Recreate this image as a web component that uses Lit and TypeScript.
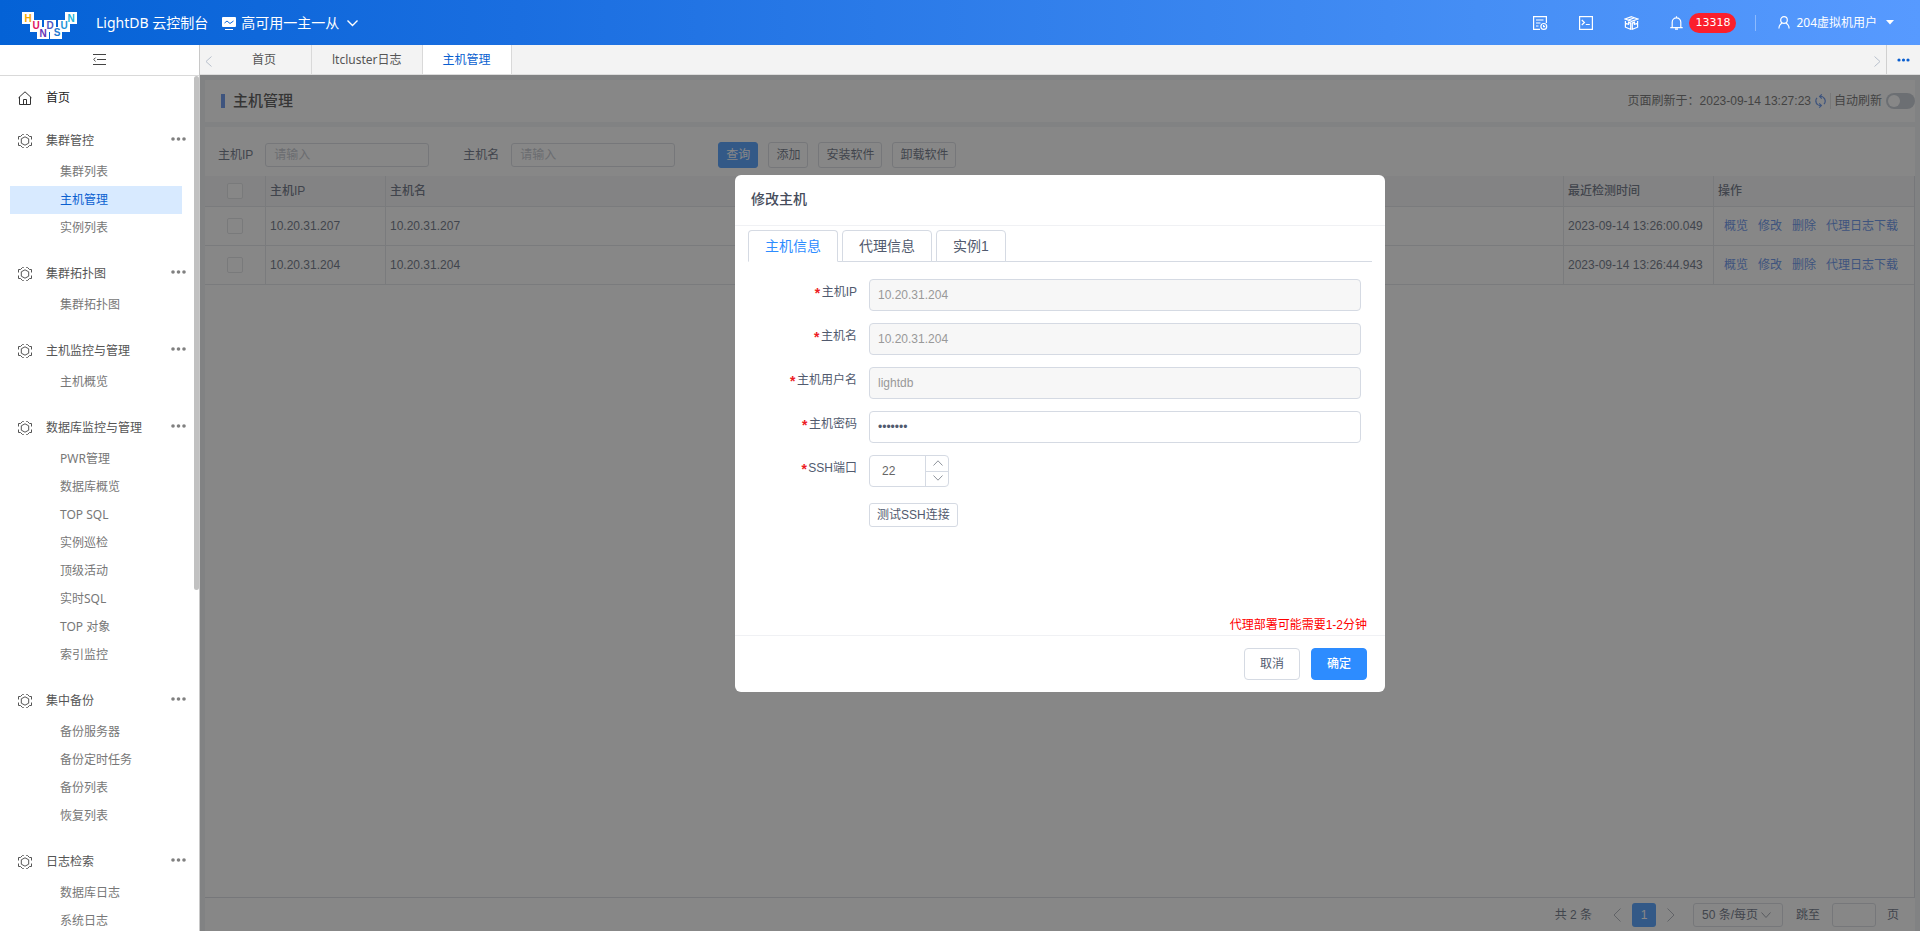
import { LitElement, html, css, svg } from "lit";
import { customElement, state } from "lit/decorators.js";
import { classMap } from "lit/directives/class-map.js";

interface MenuGroup {
  title: string;
  items: string[];
}

const MENU: MenuGroup[] = [
  { title: "集群管控", items: ["集群列表", "主机管理", "实例列表"] },
  { title: "集群拓扑图", items: ["集群拓扑图"] },
  { title: "主机监控与管理", items: ["主机概览"] },
  {
    title: "数据库监控与管理",
    items: ["PWR管理", "数据库概览", "TOP SQL", "实例巡检", "顶级活动", "实时SQL", "TOP 对象", "索引监控"],
  },
  { title: "集中备份", items: ["备份服务器", "备份定时任务", "备份列表", "恢复列表"] },
  { title: "日志检索", items: ["数据库日志", "系统日志"] },
];

const HOSTS = [
  { ip: "10.20.31.207", name: "10.20.31.207", time: "2023-09-14 13:26:00.049" },
  { ip: "10.20.31.204", name: "10.20.31.204", time: "2023-09-14 13:26:44.943" },
];

const chevron = (d: string, w: number, h: number) => html`
  <svg width=${w} height=${h} viewBox="0 0 ${w} ${h}" fill="none" stroke="currentColor" aria-hidden="true">
    <path d=${d}></path>
  </svg>
`;

/* ---------- top bar ---------- */

@customElement("top-bar")
export class TopBar extends LitElement {
  static styles = css`
    :host {
      display: flex;
      align-items: center;
      justify-content: space-between;
      height: 45px;
      padding: 0 26px 0 22px;
      box-sizing: border-box;
      background: linear-gradient(90deg, #0462d6 0%, #1a6ee0 27%, #458ef5 77%, #579aff 100%);
      color: #fff;
      font-size: 14px;
    }
    .left,
    .right,
    .cluster,
    .user {
      display: flex;
      align-items: center;
    }
    .logo {
      display: block;
      margin-top: 6px;
    }
    .logo text {
      font: bold 10px "Liberation Sans", sans-serif;
      text-anchor: middle;
    }
    .product {
      margin: 0 14px 0 19px;
      white-space: nowrap;
    }
    button {
      display: flex;
      align-items: center;
      padding: 0;
      border: 0;
      background: none;
      color: inherit;
      font: inherit;
    }
    .cluster {
      gap: 5px;
    }
    .right {
      font-size: 12px;
    }
    .icon {
      margin-right: 31px;
    }
    .alerts {
      gap: 6px;
    }
    .count {
      padding: 0 6px;
      border-radius: 10px;
      background: #fb1f2c;
      font: 11px/20px "DejaVu Sans", sans-serif;
    }
    .line {
      width: 1px;
      height: 16px;
      margin: 0 22px 0 19px;
      background: #8cbaff;
    }
    .name {
      margin: 0 9px 0 6px;
    }
    .down {
      margin-left: 3px;
    }
    svg {
      display: block;
    }
  `;

  private tile(x: number, y: number) {
    return svg`<rect x=${x} y=${y} width="12" height="12" fill="#fff"></rect>`;
  }

  render() {
    return html`
      <div class="left">
        <svg class="logo" width="55" height="27" viewBox="0 0 55 27" role="img" aria-label="HUNDSUN">
          ${this.tile(0, 0)}${this.tile(8, 8)}${this.tile(15, 15)}${this.tile(22, 8)}
          ${this.tile(28, 15)}${this.tile(36, 8)}${this.tile(43, 0)}
          <text x="6" y="10" fill="#f5a800">H</text>
          <text x="14" y="17" fill="#e0105f">U</text>
          <text x="21" y="25" fill="#6633b8">N</text>
          <text x="28" y="17" fill="#5057c4">D</text>
          <text x="35" y="24" fill="#1f78d0">S</text>
          <text x="42" y="17" fill="#1c94d8">U</text>
          <text x="49" y="10" fill="#22b4da">N</text>
        </svg>
        <span class="product">LightDB 云控制台</span>
        <button class="cluster" type="button">
          <svg width="14" height="14" viewBox="0 0 14 14" aria-hidden="true">
            <rect x="0" y="1" width="14" height="10" rx="1" fill="#fff"></rect>
            <path d="M2.5 7 5 5 8 7.5 11.5 5" fill="none" stroke="#0f68dc"></path>
            <path d="M3 13.5h8" stroke="#fff"></path>
          </svg>
          高可用一主一从
          <span class="down">
            <svg width="11" height="8" viewBox="0 0 11 8" fill="none" stroke="#fff" stroke-width="1.4" aria-hidden="true">
              <path d="M.5 1.5 5.5 6.5 10.5 1.5"></path>
            </svg>
          </span>
        </button>
      </div>
      <div class="right">
        <button class="icon" type="button" aria-label="任务">
          <svg width="15" height="14" viewBox="0 0 15 14" fill="none" stroke="#fff" stroke-width="1.2" aria-hidden="true">
            <path d="M7 13.4H.6V.6h12.8V7M3 4h7.5M3 7h4.5M3 10h2.5"></path>
            <circle cx="10.8" cy="10.4" r="2.9"></circle>
            <path d="M10.6 9v1.6h1.5"></path>
          </svg>
        </button>
        <button class="icon" type="button" aria-label="终端">
          <svg width="14" height="14" viewBox="0 0 14 14" fill="none" stroke="#fff" stroke-width="1.2" aria-hidden="true">
            <rect x=".6" y=".6" width="12.8" height="12.8"></rect>
            <path d="M2.8 4 5.4 6.5 2.8 9M6.8 8.5h4"></path>
          </svg>
        </button>
        <button class="icon" type="button" aria-label="组件">
          <svg width="15" height="14" viewBox="0 0 15 14" fill="none" stroke="#fff" stroke-width="1.2" aria-hidden="true">
            <path d="M7.5.7 13.8 3 7.5 5.3 1.2 3zM4.3 4.1l6.2-2.3"></path>
            <path d="M1.4 5v6.2l5.3 2.1V7L4.6 6.2v2.2L1.4 7.2M13.6 5v6.2l-5.3 2.1V7l2.1-.8v2.2l3.2-1.2"></path>
          </svg>
        </button>
        <button class="alerts" type="button">
          <svg width="13" height="14" viewBox="0 0 13 14" fill="none" stroke="#fff" stroke-width="1.2" aria-hidden="true">
            <path d="M2.2 11.3V6.2a4.3 4.3 0 0 1 8.6 0v5.1M.3 11.6h12.4M6.5.2v1.5M5 13.2h3"></path>
          </svg>
          <span class="count">13318</span>
        </button>
        <span class="line"></span>
        <button class="user" type="button">
          <svg width="12" height="13" viewBox="0 0 12 13" fill="none" stroke="#fff" stroke-width="1.2" aria-hidden="true">
            <circle cx="6" cy="4" r="3.3"></circle>
            <path d="M.9 12.6c.1-2.9 1.4-4.6 3.2-5.3M11.1 12.6c-.1-2.9-1.4-4.6-3.2-5.3"></path>
          </svg>
          <span class="name">204虚拟机用户</span>
          <svg width="8" height="5" viewBox="0 0 8 5" fill="#fff" aria-hidden="true"><path d="M0 0h8L4 4.5z"></path></svg>
        </button>
      </div>
    `;
  }
}

/* ---------- side menu ---------- */

@customElement("side-menu")
export class SideMenu extends LitElement {
  static styles = css`
    :host {
      position: relative;
      display: block;
      width: 200px;
      flex: none;
      box-sizing: border-box;
      border-right: 1px solid #c8c8c8;
      background: #fff;
      overflow: hidden;
      color: #555;
      font-size: 12px;
    }
    button {
      padding: 0;
      border: 0;
      background: none;
      color: inherit;
      font: inherit;
    }
    svg {
      display: block;
    }
    .fold {
      display: flex;
      width: 100%;
      height: 31px;
      align-items: center;
      justify-content: center;
      padding-bottom: 2px;
      border-bottom: 1px solid #d9d9d9;
      color: #444;
    }
    .head {
      display: flex;
      align-items: center;
      height: 34px;
      margin-top: 15px;
      padding: 0 13px 0 17px;
    }
    .home {
      height: 22px;
      margin-top: 11px;
      color: #222;
    }
    .head svg {
      flex: none;
    }
    .text {
      flex: 1;
      margin-left: 13px;
    }
    .head a,
    .item {
      color: inherit;
      text-decoration: none;
    }
    .more {
      padding-bottom: 5px;
      color: #808080;
    }
    ul {
      margin: 0;
      padding: 0 17px 0 10px;
      list-style: none;
    }
    .item {
      display: block;
      padding-left: 50px;
      line-height: 28px;
      color: #777;
    }
    .item.on {
      background: #d8eaff;
      color: #0a5fd0;
    }
    .thumb {
      position: absolute;
      top: 31px;
      right: 0;
      width: 5px;
      height: 58%;
      border-radius: 3px;
      background: #c1c1c1;
    }
  `;

  @state() private current = "主机管理";

  render() {
    return html`
      <button class="fold" type="button" aria-label="收起菜单">
        <svg width="13" height="11" viewBox="0 0 13 11" fill="none" stroke="currentColor" aria-hidden="true">
          <path d="M0 .5h13M4 5.5h9M0 10.5h13M2.6 3.6.7 5.5l1.9 1.9"></path>
        </svg>
      </button>
      <nav>
        <div class="head home">
          <svg width="16" height="14" viewBox="0 0 16 14" fill="none" stroke="#333" aria-hidden="true">
            <path d="M1.5 6.8 8 .8l6.5 6M2.5 6v7.5h11V6M6.5 13.5v-5h3v5"></path>
          </svg>
          <a class="text" href="#">首页</a>
        </div>
        ${MENU.map(
          (group) => html`
            <div class="head">
              <svg width="16" height="16" viewBox="0 0 16 16" fill="none" stroke="#555" aria-hidden="true">
                <path d="M1.5 6.5v-3h2l2-2h1.2M9.3 1.5h1.2l2 2h2v3M14.5 9.5v3h-2l-2 2H9.3M6.7 14.5H5.5l-2-2h-2v-3"></path>
                <path d="m8 3.8 3.7 2v4.4l-3.7 2-3.7-2V5.8z"></path>
              </svg>
              <span class="text">${group.title}</span>
              <button class="more" type="button" aria-label="更多">
                <svg width="15" height="4" viewBox="0 0 15 4" fill="currentColor" aria-hidden="true">
                  <circle cx="2" cy="2" r="1.8"></circle>
                  <circle cx="7.5" cy="2" r="1.8"></circle>
                  <circle cx="13" cy="2" r="1.8"></circle>
                </svg>
              </button>
            </div>
            <ul>
              ${group.items.map(
                (item) => html`<li>
                  <a
                    href="#"
                    class=${classMap({ item: true, on: item === this.current })}
                    @click=${(e: Event) => {
                      e.preventDefault();
                      this.current = item;
                    }}
                    >${item}</a
                  >
                </li>`
              )}
            </ul>
          `
        )}
      </nav>
      <span class="thumb"></span>
    `;
  }
}

/* ---------- open pages ---------- */

@customElement("page-tabs")
export class PageTabs extends LitElement {
  static styles = css`
    :host {
      display: flex;
      height: 30px;
      box-sizing: border-box;
      border-bottom: 1px solid #dcdcdc;
      background: #f3f3f3;
      color: #555;
      font-size: 12px;
    }
    button {
      display: flex;
      align-items: center;
      justify-content: center;
      padding: 0;
      border: 0;
      background: none;
      color: inherit;
      font: inherit;
    }
    .arrow {
      width: 17px;
      padding-top: 3px;
      color: #b8c0cc;
    }
    .tab {
      padding: 0 20px;
      border-right: 1px solid #d9d9d9;
    }
    .first {
      padding: 0 35px;
    }
    .tab.on {
      background: #fff;
      color: #0a5fd0;
    }
    .next {
      margin-left: auto;
    }
    .more {
      width: 34px;
      border-left: 1px solid #d0d0d0;
      color: #0a5fd0;
    }
  `;

  render() {
    return html`
      <button class="arrow" type="button" aria-label="向左">${chevron("M6.5.5 1 5.5 6.5 10.5", 7, 11)}</button>
      <button class="tab first" type="button">首页</button>
      <button class="tab" type="button">ltcluster日志</button>
      <button class="tab on" type="button">主机管理</button>
      <button class="arrow next" type="button" aria-label="向右">${chevron("M.5.5 6 5.5.5 10.5", 7, 11)}</button>
      <button class="more" type="button" aria-label="更多">
        <svg width="13" height="4" viewBox="0 0 13 4" fill="currentColor" aria-hidden="true">
          <circle cx="2" cy="2" r="1.6"></circle>
          <circle cx="6.5" cy="2" r="1.6"></circle>
          <circle cx="11" cy="2" r="1.6"></circle>
        </svg>
      </button>
    `;
  }
}

/* ---------- host list ---------- */

@customElement("host-page")
export class HostPage extends LitElement {
  static styles = css`
    :host {
      display: flex;
      flex: 1;
      flex-direction: column;
      gap: 5px;
      box-sizing: border-box;
      padding: 5px 5px 0;
      background: #f0f2f5;
      color: #515a6e;
      font-size: 12px;
    }
    * {
      box-sizing: border-box;
    }
    button,
    input,
    select {
      font: inherit;
      color: inherit;
    }
    svg {
      display: block;
    }
    .title-bar {
      display: flex;
      align-items: center;
      justify-content: space-between;
      height: 42px;
      padding-left: 16px;
      background: #fff;
    }
    h1 {
      margin: 0;
      padding-left: 8px;
      border-left: 4px solid #4a80e8;
      color: #333;
      font-size: 15px;
      font-weight: 500;
      line-height: 14px;
    }
    .refresh {
      display: flex;
      align-items: center;
      color: #555;
    }
    .reload {
      margin-left: 4px;
      padding: 0;
      border: 0;
      background: none;
      color: #4a80e8;
    }
    .switch-label {
      display: flex;
      align-items: center;
      gap: 4px;
      margin-left: 4px;
      padding-left: 3px;
      border-left: 1px solid #ddd;
      line-height: 12px;
    }
    .switch {
      width: 29px;
      height: 16px;
      margin: 0;
      padding: 2px;
      border-radius: 8px;
      background: #bcc3cd;
      appearance: none;
    }
    .switch::before {
      content: "";
      display: block;
      width: 12px;
      height: 12px;
      border-radius: 6px;
      background: #fff;
    }
    .panel {
      display: flex;
      flex: 1;
      flex-direction: column;
      background: #fff;
    }
    .filters {
      display: flex;
      align-items: center;
      padding: 15px 13px 8px;
    }
    .box {
      height: 24px;
      border: 1px solid #d4d8de;
      border-radius: 3px;
      background: #fff;
    }
    .filters .box {
      width: 164px;
      margin: 0 34px 0 12px;
      padding: 0 8px;
    }
    .box::placeholder {
      color: #b8bcc6;
    }
    .actions {
      display: flex;
      gap: 10px;
      margin-left: 9px;
    }
    .btn {
      height: 26px;
      padding: 0 7px;
      border: 1px solid #d4d8de;
      border-radius: 3px;
      background: #fff;
    }
    .btn.primary {
      border-color: #2d8cff;
      background: #2d8cff;
      color: #fff;
    }
    .grid {
      flex: 1;
      border-right: 1px solid #d4d8de;
      border-bottom: 1px solid #d4d8de;
    }
    table {
      width: 100%;
      table-layout: fixed;
      border-collapse: separate;
      border-spacing: 0;
    }
    th,
    td {
      padding: 0 4px;
      border-right: 1px solid #dfe2e7;
      border-bottom: 1px solid #dfe2e7;
      text-align: left;
    }
    th {
      height: 31px;
      background: #f5f6f7;
      font-weight: 500;
    }
    td {
      height: 39px;
    }
    th:last-child,
    td:last-child {
      border-right: 0;
    }
    .pick {
      width: 61px;
      text-align: center;
    }
    .w-ip {
      width: 120px;
    }
    .w-time {
      width: 150px;
    }
    .w-ops {
      width: 200px;
    }
    .check {
      display: block;
      width: 16px;
      height: 16px;
      margin: 0 auto;
      border: 1px solid #dcdee2;
      border-radius: 2px;
      background: #fff;
      appearance: none;
    }
    .ops {
      display: flex;
      gap: 10px;
      padding-left: 6px;
      white-space: nowrap;
    }
    .ops a {
      color: #4a80e8;
      text-decoration: none;
    }
    .pager {
      display: flex;
      align-items: center;
      justify-content: flex-end;
      height: 33px;
      padding: 0 16px 0 0;
      white-space: nowrap;
    }
    .nav {
      width: 30px;
      padding: 0;
      border: 0;
      background: none;
      color: #a0a6b0;
    }
    .nav svg {
      margin: 0 auto;
    }
    .total {
      margin-right: 10px;
    }
    .page {
      width: 24px;
      height: 24px;
      padding: 0;
      border: 0;
      border-radius: 3px;
      background: #2d8cff;
      color: #fff;
    }
    .size {
      display: flex;
      align-items: center;
      margin: 0 13px 0 7px;
    }
    .size select {
      width: 90px;
      padding: 0 8px;
      appearance: none;
    }
    .size svg {
      margin: 0 12px 0 -22px;
      color: #8a909c;
    }
    .size + label {
      display: flex;
      align-items: center;
      gap: 12px;
    }
    .jump {
      width: 44px;
    }
    .unit {
      margin-left: 11px;
    }
  `;

  render() {
    return html`
      <header class="title-bar">
        <h1>主机管理</h1>
        <div class="refresh">
          <span>页面刷新于：2023-09-14 13:27:23</span>
          <button class="reload" type="button" aria-label="刷新">
            <svg width="11" height="14" viewBox="0 0 11 14" fill="none" stroke="currentColor" stroke-width="1.2" aria-hidden="true">
              <path d="M2.6 10.6A4.6 4.6 0 0 1 2 3.9M5 2.5a4.5 4.5 0 0 1 5 3.9M8.4 3.4a4.6 4.6 0 0 1 .6 6.8M6 11.5A4.5 4.5 0 0 1 1 7.6"></path>
              <path d="M6.8.4 4.6 2.5l2.2 2.1M4.2 9.4l2.2 2.1-2.2 2.1"></path>
            </svg>
          </button>
          <label class="switch-label">自动刷新<input class="switch" type="checkbox" role="switch" /></label>
        </div>
      </header>
      <section class="panel">
        <form class="filters" @submit=${(e: Event) => e.preventDefault()}>
          <label for="ip">主机IP</label>
          <input id="ip" class="box" placeholder="请输入" />
          <label for="name">主机名</label>
          <input id="name" class="box" placeholder="请输入" />
          <div class="actions">
            <button class="btn primary" type="submit">查询</button>
            <button class="btn" type="button">添加</button>
            <button class="btn" type="button">安装软件</button>
            <button class="btn" type="button">卸载软件</button>
          </div>
        </form>
        <div class="grid">
          <table>
            <thead>
              <tr>
                <th class="pick"><input class="check" type="checkbox" aria-label="全选" /></th>
                <th class="w-ip">主机IP</th>
                <th>主机名</th>
                <th class="w-time">最近检测时间</th>
                <th class="w-ops">操作</th>
              </tr>
            </thead>
            <tbody>
              ${HOSTS.map(
                (host) => html`
                  <tr>
                    <td class="pick"><input class="check" type="checkbox" aria-label=${host.ip} /></td>
                    <td>${host.ip}</td>
                    <td>${host.name}</td>
                    <td>${host.time}</td>
                    <td>
                      <div class="ops">
                        <a href="#">概览</a><a href="#">修改</a><a href="#">删除</a><a href="#">代理日志下载</a>
                      </div>
                    </td>
                  </tr>
                `
              )}
            </tbody>
          </table>
        </div>
        <footer class="pager">
          <span class="total">共 2 条</span>
          <button class="nav" type="button" aria-label="上一页">${chevron("M7.5.5 1 7 7.5 13.5", 8, 14)}</button>
          <button class="page" type="button">1</button>
          <button class="nav" type="button" aria-label="下一页">${chevron("M.5.5 7 7 .5 13.5", 8, 14)}</button>
          <div class="size">
            <select class="box" aria-label="每页条数">
              <option>50 条/每页</option>
            </select>
            ${chevron("M.5.5 5 5.5 9.5.5", 10, 6)}
          </div>
          <label>跳至<input class="box jump" type="text" /></label>
          <span class="unit">页</span>
        </footer>
      </section>
    `;
  }
}

/* ---------- edit dialog ---------- */

@customElement("host-dialog")
export class HostDialog extends LitElement {
  static styles = css`
    :host {
      display: block;
      width: 650px;
      margin: 100px auto 0;
      border-radius: 6px;
      background: #fff;
      color: #515a6e;
      font-size: 12px;
    }
    * {
      box-sizing: border-box;
    }
    button,
    input {
      font: inherit;
      color: inherit;
    }
    svg {
      display: block;
    }
    h2 {
      margin: 0;
      padding: 0 16px 2px;
      border-bottom: 1px solid #f0f1f4;
      color: #464c5b;
      font-size: 14px;
      font-weight: 500;
      line-height: 48px;
    }
    .body {
      display: flex;
      flex-direction: column;
      min-height: 409px;
      padding: 4px 13px 0;
    }
    .tabs {
      display: flex;
      gap: 4px;
      height: 32px;
      border-bottom: 1px solid #d5dae3;
    }
    .tab {
      height: 32px;
      padding: 0 16px;
      border: 1px solid #d5dae3;
      border-radius: 4px 4px 0 0;
      background: #fff;
      font-size: 14px;
    }
    .tab.on {
      border-bottom-color: #fff;
      color: #2d8cff;
    }
    form {
      display: grid;
      grid-template-columns: 109px 1fr;
      gap: 12px;
      padding: 17px 11px 0 0;
    }
    label {
      line-height: 26px;
      text-align: right;
      white-space: nowrap;
    }
    label::before {
      content: "*";
      color: #ed1c24;
      font: bold 14px/12px "Liberation Mono", monospace;
      vertical-align: -3px;
    }
    .field {
      height: 32px;
      padding: 0 8px;
      border: 1px solid #d5dae3;
      border-radius: 4px;
      background: #fff;
      color: #515a6e;
    }
    .field:disabled {
      background: #f7f7f7;
      color: #999;
    }
    .number {
      display: grid;
      grid-template-columns: 1fr 23px;
      width: 80px;
      height: 32px;
      border: 1px solid #d5dae3;
      border-radius: 4px;
    }
    .number input {
      width: 100%;
      padding: 0 12px;
      border: 0;
      background: none;
      appearance: textfield;
      color: #666;
    }
    .number input::-webkit-inner-spin-button {
      display: none;
    }
    .steps {
      display: grid;
      grid-template-rows: 1fr 1fr;
      border-left: 1px solid #d5dae3;
    }
    .steps button {
      display: flex;
      align-items: center;
      justify-content: center;
      padding: 0 0 2px 2px;
      border: 0;
      background: none;
      color: #8f949c;
    }
    .steps button + button {
      border-top: 1px solid #d5dae3;
    }
    .test {
      grid-column: 2;
      justify-self: start;
      height: 24px;
      margin-top: 4px;
      padding: 0 7px;
      border: 1px solid #d5dae3;
      border-radius: 3px;
      background: #fff;
    }
    .note {
      margin: auto 5px 0 0;
      color: #f00;
      line-height: 20px;
      text-align: right;
    }
    footer {
      display: flex;
      justify-content: flex-end;
      gap: 11px;
      padding: 12px 18px;
      border-top: 1px solid #f0f1f4;
    }
    .btn {
      width: 56px;
      height: 32px;
      padding: 0;
      border: 1px solid #d5dae3;
      border-radius: 4px;
      background: #fff;
    }
    .btn.ok {
      border-color: #2d8cff;
      background: #2d8cff;
      color: #fff;
      font-weight: 500;
    }
  `;

  @state() private tab = 0;

  render() {
    return html`
      <h2>修改主机</h2>
      <div class="body">
        <div class="tabs" role="tablist">
          ${["主机信息", "代理信息", "实例1"].map(
            (name, i) => html`<button
              type="button"
              role="tab"
              aria-selected=${i === this.tab}
              class=${classMap({ tab: true, on: i === this.tab })}
              @click=${() => (this.tab = i)}
            >
              ${name}
            </button>`
          )}
        </div>
        <form>
          <label for="host-ip">主机IP</label>
          <input id="host-ip" class="field" value="10.20.31.204" disabled />
          <label for="host-name">主机名</label>
          <input id="host-name" class="field" value="10.20.31.204" disabled />
          <label for="host-user">主机用户名</label>
          <input id="host-user" class="field" value="lightdb" disabled />
          <label for="host-pass">主机密码</label>
          <input id="host-pass" class="field" type="password" value="lightdb" autocomplete="off" />
          <label for="ssh-port">SSH端口</label>
          <div class="number">
            <input id="ssh-port" type="number" value="22" />
            <div class="steps">
              <button type="button" aria-label="增加">${chevron("M.5 5.5 5 .8 9.5 5.5", 10, 6)}</button>
              <button type="button" aria-label="减少">${chevron("M.5.5 5 5.2 9.5.5", 10, 6)}</button>
            </div>
          </div>
          <button class="test" type="button">测试SSH连接</button>
        </form>
        <p class="note">代理部署可能需要1-2分钟</p>
      </div>
      <footer>
        <button class="btn" type="button">取消</button>
        <button class="btn ok" type="button">确定</button>
      </footer>
    `;
  }
}

/* ---------- shell ---------- */

@customElement("app-root")
export class AppRoot extends LitElement {
  static styles = css`
    :host {
      display: flex;
      flex-direction: column;
      height: 100vh;
      overflow: hidden;
      font-family: "Noto Sans", "Noto Sans CJK SC", sans-serif;
      line-height: 18px;
    }
    .shell {
      display: flex;
      flex: 1;
      min-height: 0;
    }
    .main {
      display: flex;
      flex: 1;
      flex-direction: column;
      min-width: 0;
    }
    .content {
      position: relative;
      display: flex;
      flex: 1;
      font-family: "Liberation Sans", "Noto Sans CJK SC", sans-serif;
    }
    .mask {
      position: absolute;
      inset: 0;
      background: rgba(55, 55, 55, 0.6);
    }
  `;

  render() {
    return html`
      <top-bar></top-bar>
      <div class="shell">
        <side-menu></side-menu>
        <div class="main">
          <page-tabs></page-tabs>
          <div class="content">
            <host-page></host-page>
            <div class="mask" role="dialog" aria-modal="true" aria-label="修改主机">
              <host-dialog></host-dialog>
            </div>
          </div>
        </div>
      </div>
    `;
  }
}
